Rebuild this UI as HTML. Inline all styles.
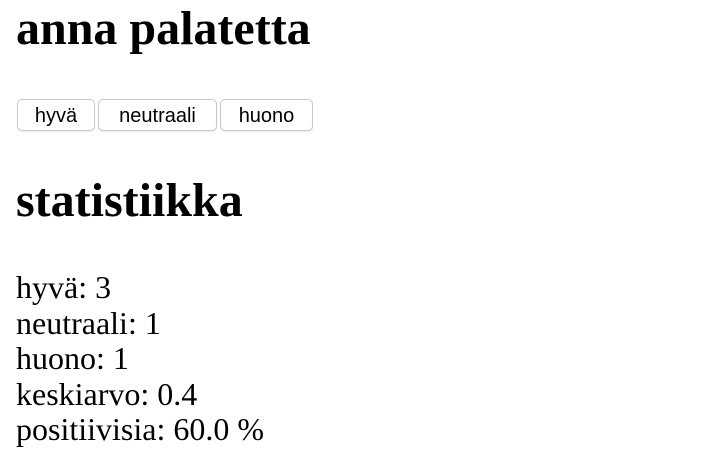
<!DOCTYPE html>
<html><head><meta charset="utf-8"><style>
html,body{margin:0;padding:0;background:#fff;width:726px;height:460px;overflow:hidden}
body{font-family:"Liberation Serif",serif;color:#000;position:relative}
.h{position:absolute;left:16px;font-weight:bold;font-size:48px;line-height:48px;margin:0;white-space:nowrap}
.btns{position:absolute;left:17px;top:99px;display:flex;gap:3px}
.btns span{display:inline-block;box-sizing:border-box;height:32px;line-height:33px;border:1px solid #c8c8c8;border-radius:5px;font-family:"Liberation Sans",sans-serif;font-size:20px;text-align:center;background:#fff;box-shadow:0 1px 1px rgba(0,0,0,.08)}
.stats{position:absolute;left:16px;top:270px;font-size:32px;line-height:35.5px;white-space:nowrap}
</style></head><body>
<div class="h" style="top:5px">anna palatetta</div>
<div class="btns"><span style="width:78px">hyvä</span><span style="width:119px">neutraali</span><span style="width:93px">huono</span></div>
<div class="h" style="top:177px">statistiikka</div>
<div class="stats">hyvä: 3<br>neutraali: 1<br>huono: 1<br>keskiarvo: 0.4<br>positiivisia: 60.0 %</div>
</body></html>
